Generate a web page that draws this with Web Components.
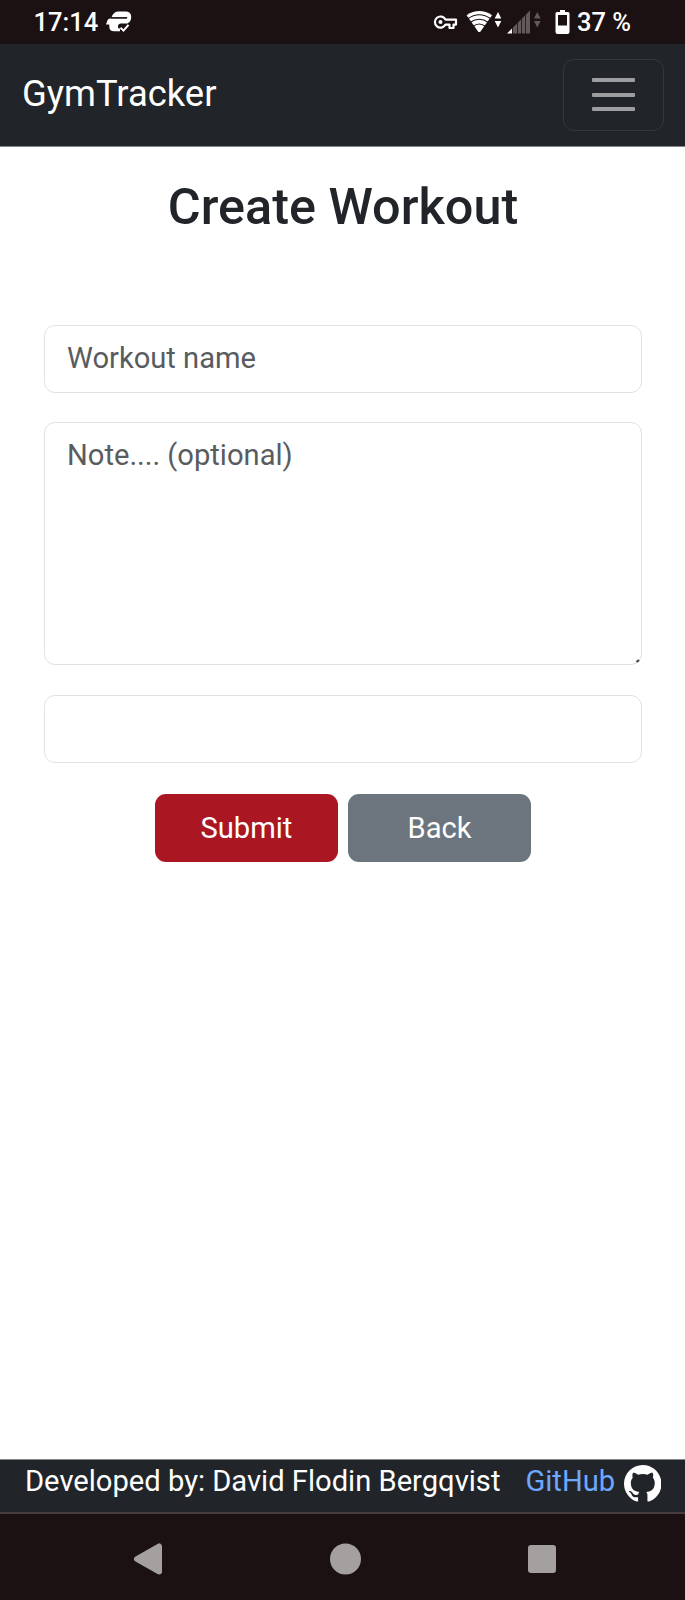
<!DOCTYPE html>
<html lang="en">
<head>
<meta charset="utf-8">
<title>GymTracker</title>
<style>
html,body{margin:0;height:100%}
body{font-family:Roboto,"Noto Sans",sans-serif;font-size:29.15px;line-height:1.5;color:#212529;background:#fff}
</style>
</head>
<body>
<gym-app></gym-app>
<script>
const define = (name, html) => customElements.define(name, class extends HTMLElement {
  constructor() {
    super();
    const t = document.createElement('template');
    t.innerHTML = html;
    this.attachShadow({ mode: 'open' }).append(t.content.cloneNode(true));
  }
});

define('status-bar', `
<style>
:host{display:flex;align-items:center;justify-content:space-between;height:44px;background:#1b1112;color:#fff;font-size:25.500px;font-weight:500;line-height:44px;box-sizing:border-box;padding:0 54px 0 33.500px}
div{display:flex;align-items:center;height:44px}
svg{display:block;flex:none}
span{white-space:pre}
.time{width:65px}
.level{width:54px}
</style>
<div><span class="time">17:14</span>
<svg width="27" height="44" viewBox="105 0 27 44" style="margin-left:6.500px">
<path fill="#fff" d="M111.500 17.200Q113.500 11.500 118.500 11.500H125.500Q131.200 11.500 131.200 17Q131.200 21.500 127.500 23.500H120.500Q117.500 24.200 118 27.500Q118.200 28.500 120 28.500V31.300H114Q109.300 31.300 109.300 26.500V24.500H106L107.500 20.300Q108.200 18.600 110 18.600H126.500L127.800 17.200Z"/>
<path fill="none" stroke="#1b1112" stroke-width="1.200" d="M111 17.900H127"/>
<path fill="none" stroke="#fff" stroke-width="2" d="M120.500 27.700l3 2.900 5-5.800"/>
</svg></div>
<div>
<svg width="110" height="44" viewBox="433 0 110 44" style="margin-right:11.500px">
<path fill="none" stroke="#fff" stroke-width="2.200" stroke-linejoin="round" d="M445.500 19.600A5.600 5.600 0 1 0 445.500 24.600H449.500V28H453.500V24.600H456V19.600Z"/>
<circle cx="440.500" cy="22" r="2" fill="#fff"/>
<path fill="#fff" d="M466.600 15.200Q479.300 6.800 492 15.200L480.700 31.200Q479.300 33 477.900 31.200Z"/>
<path fill="none" stroke="#1b1112" stroke-width="1.200" d="M467.500 19Q479.300 10.500 491 19M470 22.500Q479.300 16 488.500 22.500M473 26.500Q479.300 21.500 485.500 26.500"/>
<path fill="#fff" d="M498 12l3.300 6.500h-6.600zM498 27.500l3.300-6.500h-6.600z"/>
<path fill="#63595a" d="M512.500 28l17.500-17.500v23h-17.500z"/>
<path fill="#fff" d="M507 33.500l5-5v5z"/>
<path stroke="#1b1112" stroke-width=".8" d="M512.500 20v14M517.500 17v17M521.500 15v19M525.500 13v21"/>
<path fill="#63595a" d="M537.300 12l3.300 6.500H534zM537.300 27.500l3.300-6.500H534z"/>
</svg>
<svg width="15" height="44" viewBox="554.500 0 15 44" style="margin-right:7.500px"><path fill="#fff" fill-rule="evenodd" d="M559.500 10h5v2h3q1.500 0 1.500 1.500V32q0 2-2 2h-10q-2 0-2-2V13.500q0-1.500 1.500-1.500h3zM557.500 15v10.500h9V15z"/></svg>
<span class="level">37 %</span></div>`);

define('menu-toggle', `
<style>
:host{display:flex;flex-direction:column;align-items:center;justify-content:center;gap:10.500px;box-sizing:border-box;width:101.500px;height:72px;border:1.500px solid #35393d;border-radius:11px}
i{width:43.500px;height:4px;border-radius:1px;background:#9b9d9f}
</style><i></i><i></i><i></i>`);

define('nav-bar', `
<style>
:host{display:flex;align-items:center;justify-content:space-between;height:103px;box-sizing:border-box;padding:0 21px 1px 22px;background:#212529;border-bottom:1px solid #85878a;color:#fff;font-size:36.400px}
</style><span><slot></slot></span><menu-toggle></menu-toggle>`);

define('form-field', `
<style>
:host{display:block;box-sizing:border-box;height:68px;border:1.500px solid #dee2e6;border-radius:11px;padding:11px 22px;line-height:43.700px;color:#595c5f;background:#fff}
:host([multiline]){height:243px;position:relative}
svg{display:none;position:absolute;right:0;bottom:0}
:host([multiline]) svg{display:block}
</style><slot></slot><svg width="6" height="6"><path d="M1.500 4L4 2" stroke="#444" stroke-width="2.200"/></svg>`);

define('action-button', `
<style>
:host{display:block;box-sizing:border-box;width:182.500px;height:68px;padding-top:12.500px;border-radius:11px;background:#6c757d;color:#fff;text-align:center;line-height:43.700px}
:host([primary]){background:#aa1723}
</style><slot></slot>`);

define('workout-form', `
<style>
:host{display:block;padding:0 43px 0 44px}
h1{margin:0;padding-top:29px;height:149px;box-sizing:content-box;font-size:50.400px;font-weight:500;line-height:61px;text-align:center}
.fields{display:grid;row-gap:30px}
form-field[multiline]{margin-top:-1px}
.actions{display:flex;justify-content:center;gap:10.600px;margin-top:31px}
</style>
<h1>Create Workout</h1>
<div class="fields">
<form-field>Workout name</form-field>
<form-field multiline>Note.... (optional)</form-field>
<form-field></form-field>
</div>
<div class="actions"><action-button primary>Submit</action-button><action-button>Back</action-button></div>`);

define('page-footer', `
<style>
:host{display:flex;align-items:flex-start;height:53px;box-sizing:border-box;padding:0 24px 0 25px;background:#212529;border-top:1px solid #85878a;color:#fff;line-height:42px;white-space:nowrap}
a{color:#6ea8fe;margin-left:25px}
svg{display:block;margin:4.500px 0 0 auto}
</style>
<span>Developed by: David Flodin Bergqvist</span><a>GitHub</a>
<svg width="37.500" height="37.500" viewBox="0 0 16 16" fill="#fff"><path d="M8 0C3.580 0 0 3.580 0 8c0 3.540 2.290 6.530 5.470 7.590.4.070.550-.170.550-.380 0-.190-.010-.820-.010-1.490-2.010.370-2.530-.490-2.690-.940-.090-.230-.480-.940-.820-1.130-.280-.150-.680-.520-.010-.530.630-.010 1.080.580 1.230.820.720 1.210 1.870.870 2.330.660.070-.520.280-.870.510-1.070-1.780-.2-3.640-.890-3.640-3.950 0-.870.310-1.590.820-2.150-.080-.2-.360-1.020.080-2.120 0 0 .670-.210 2.200.820.640-.180 1.320-.270 2-.270s1.360.090 2 .270c1.530-1.040 2.200-.820 2.200-.820.440 1.100.160 1.920.080 2.120.510.560.820 1.270.820 2.150 0 3.070-1.870 3.750-3.650 3.950.290.250.540.730.540 1.480 0 1.070-.010 1.930-.010 2.200 0 .210.150.460.550.380A8.010 8.010 0 0 0 16 8c0-4.420-3.580-8-8-8"/></svg>`);

define('system-nav', `
<style>
:host{display:flex;align-items:center;height:88px;box-sizing:border-box;border-top:2px solid #463c3e;background:#1b1112;padding:4px 129px 0 133px;justify-content:space-between}
svg{display:block}
</style>
<svg width="30" height="32"><path d="M4 16L26 3.500V28.500Z" fill="#a5a0a0" stroke="#a5a0a0" stroke-width="6" stroke-linejoin="round"/></svg>
<svg width="32" height="32"><circle cx="15.500" cy="16" r="15.500" fill="#a5a0a0"/></svg>
<svg width="28" height="28"><rect width="28" height="28" rx="3" fill="#a5a0a0"/></svg>`);

define('gym-app', `
<style>
:host{display:flex;flex-direction:column;width:685px;height:1600px;overflow:hidden}
workout-form{flex:1}
</style>
<status-bar></status-bar>
<nav-bar>GymTracker</nav-bar>
<workout-form></workout-form>
<page-footer></page-footer>
<system-nav></system-nav>`);
</script>
</body>
</html>
